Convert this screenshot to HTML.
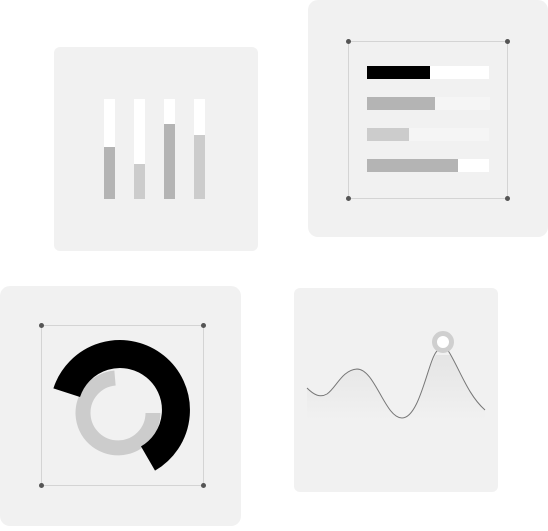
<!DOCTYPE html>
<html><head><style>
body{margin:0;width:548px;height:526px;background:#fff;overflow:hidden}
</style></head><body>
<svg width="548" height="526" viewBox="0 0 548 526" xmlns="http://www.w3.org/2000/svg">
<defs>
<linearGradient id="g" x1="0" y1="0" x2="0" y2="1">
<stop offset="0" stop-color="#dcdcdc"/><stop offset="1" stop-color="#f1f1f1"/>
</linearGradient>
</defs>
<!-- card1 -->
<rect x="54" y="47" width="204" height="204" rx="6" fill="#f1f1f1"/>
<rect x="104" y="99" width="11" height="100" fill="#fff"/>
<rect x="104" y="147" width="11" height="52" fill="#b4b4b4"/>
<rect x="134" y="99" width="11" height="100" fill="#fff"/>
<rect x="134" y="164" width="11" height="35" fill="#cccccc"/>
<rect x="164" y="99" width="11" height="100" fill="#fff"/>
<rect x="164" y="124" width="11" height="75" fill="#b4b4b4"/>
<rect x="194" y="99" width="11" height="100" fill="#fff"/>
<rect x="194" y="135" width="11" height="64" fill="#cccccc"/>
<!-- card2 -->
<rect x="308" y="0" width="240" height="237" rx="10" fill="#f1f1f1"/>
<rect x="348.5" y="41.5" width="159" height="157" fill="none" stroke="#d4d4d4"/>
<g fill="#555"><circle cx="348.5" cy="41.5" r="2.5"/><circle cx="507.5" cy="41.5" r="2.5"/><circle cx="348.5" cy="198.5" r="2.5"/><circle cx="507.5" cy="198.5" r="2.5"/></g>
<rect x="367" y="66" width="122" height="13" fill="#fff"/><rect x="367" y="66" width="63" height="13" fill="#000"/>
<rect x="367" y="97" width="123" height="13" fill="#f5f5f5"/><rect x="367" y="97" width="68" height="13" fill="#b4b4b4"/>
<rect x="367" y="128" width="122" height="13" fill="#f5f5f5"/><rect x="367" y="128" width="42" height="13" fill="#cccccc"/>
<rect x="367" y="159" width="122" height="13" fill="#fff"/><rect x="367" y="159" width="91" height="13" fill="#b4b4b4"/>
<!-- card3 -->
<rect x="0" y="286" width="241" height="240" rx="10" fill="#f1f1f1"/>
<rect x="41.5" y="325.5" width="162" height="160" fill="none" stroke="#d4d4d4"/>
<g fill="#555"><circle cx="41.5" cy="325.5" r="2.5"/><circle cx="203.5" cy="325.5" r="2.5"/><circle cx="41.5" cy="485.5" r="2.5"/><circle cx="203.5" cy="485.5" r="2.5"/></g>
<path d="M153 413 A35 35 0 1 1 115 378" fill="none" stroke="#cccccc" stroke-width="15"/>
<path d="M66.7 392.7 A56 56 0 1 1 148 458.5" fill="none" stroke="#000" stroke-width="28"/>
<!-- card4 -->
<rect x="294" y="288" width="204" height="204" rx="6" fill="#f1f1f1"/>
<path d="M307 388 C314 395 320 398 327 394 C336 388 342 370 357 369 C375 369 385 418 402 418 C420 418 425 372 436 355 L450 355 C462 372 468 395 485 410 L485 420 L307 420 Z" fill="url(#g)" opacity="0.6"/>
<path d="M307 388 C314 395 320 398 327 394 C336 388 342 370 357 369 C375 369 385 418 402 418 C420 418 428 360 437 351 C440 348 446 348 449 352 C460 370 468 395 485 410" fill="none" stroke="#777" stroke-width="1"/>
<circle cx="443" cy="342" r="8.5" fill="#fff" stroke="#cfcfcf" stroke-width="5"/>
</svg>
</body></html>
